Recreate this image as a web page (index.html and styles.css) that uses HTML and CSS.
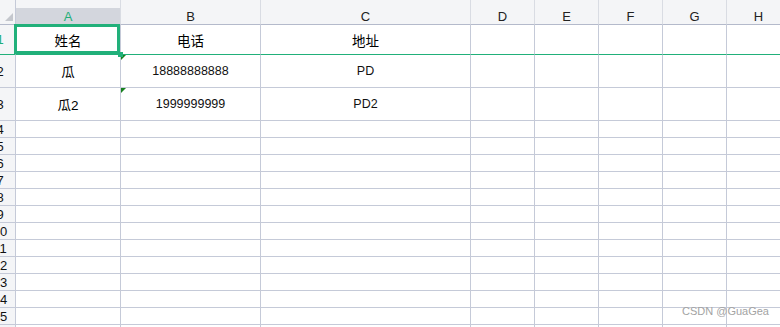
FILE: index.html
```html
<!DOCTYPE html>
<html lang="zh-CN">
<head>
    <meta charset="UTF-8">
    <title>Sheet1</title>
    <link rel="stylesheet" href="styles.css">
</head>
<body>

<div class="sheet">
    <!-- intestazione colonne -->
    <div class="row head">
        <div class="cell corner"><span class="tri"></span></div>
        <div class="cell col active">A</div>
        <div class="cell col">B</div>
        <div class="cell col">C</div>
        <div class="cell col">D</div>
        <div class="cell col">E</div>
        <div class="cell col">F</div>
        <div class="cell col">G</div>
        <div class="cell col">H</div>
    </div>

    <div class="row r1 frozen">
        <div class="cell num active"><span>1</span></div>
        <div class="cell sel zh">姓名<span class="handle"></span></div>
        <div class="cell zh">电话</div>
        <div class="cell zh">地址</div>
        <div class="cell"></div><div class="cell"></div><div class="cell"></div><div class="cell"></div><div class="cell"></div>
    </div>

    <div class="row r2">
        <div class="cell num"><span>2</span></div>
        <div class="cell zh">瓜</div>
        <div class="cell flag">18888888888</div>
        <div class="cell">PD</div>
        <div class="cell"></div><div class="cell"></div><div class="cell"></div><div class="cell"></div><div class="cell"></div>
    </div>

    <div class="row r2">
        <div class="cell num"><span>3</span></div>
        <div class="cell zh">瓜2</div>
        <div class="cell flag">1999999999</div>
        <div class="cell">PD2</div>
        <div class="cell"></div><div class="cell"></div><div class="cell"></div><div class="cell"></div><div class="cell"></div>
    </div>

    <div id="empty-rows"></div>
</div>

<div class="mark">CSDN @GuaGea</div>

<script>
// righe vuote 4..16
const box = document.getElementById('empty-rows');
for (let n = 4; n <= 16; n++) {
    let html = `<div class="cell num"><span>${n}</span></div>`;
    for (let c = 0; c < 8; c++) html += '<div class="cell"></div>';
    const row = document.createElement('div');
    row.className = 'row small';
    row.innerHTML = html;
    box.appendChild(row);
}
</script>

</body>
</html>
```

FILE: styles.css
```css
body { margin: 0; background: #fff; overflow: hidden; font-family: "Liberation Sans", Arial, "Noto Sans CJK SC", sans-serif; color: #111; }
.sheet { width: 790px; }
.row { display: grid; grid-template-columns: 16px 105px 140px 210px repeat(5, 64px); }
.row.head { height: 25px; }
.row.r1 { height: 30px; }
.row.r2 { height: 33px; }
.row.small { height: 17px; }

.cell { box-sizing: border-box; border-right: 1px solid #c5cad8; border-bottom: 1px solid #c5cad8; display: flex; align-items: center; justify-content: center; font-size: 12.5px; position: relative; }
.cell.zh { font-size: 13.5px; color: #000; }
.frozen .cell { border-bottom-color: #21b07a; }

.head .cell { background: #f4f5f7; border-right-color: #d9dce3; border-bottom-color: #b4bacb; padding-top: 8px; font-size: 13px; color: #222; }
.head .cell.active { background: linear-gradient(#f4f5f7 8px, #d3d6dd 8px); color: #1fae78; }
.head .corner { border-right-color: #c5cad8; }
.tri { position: absolute; left: 5px; top: 13px; width: 0; height: 0; border-left: 8px solid transparent; border-bottom: 8px solid #c4c7cd; }

.num { background: #f4f5f7; justify-content: flex-start; overflow: hidden; font-size: 13px; }
.num span { flex: none; width: 32px; margin-left: -16px; text-align: center; }
.num.active { color: #1fae78; }

.sel::after { content: ""; position: absolute; left: -2px; top: -1px; width: 106px; height: 30px; box-sizing: border-box; border: 3px solid #21b07a; }
.handle { position: absolute; right: -3px; bottom: -3px; width: 5px; height: 5px; background: #21b07a; z-index: 2; }
.flag::before { content: ""; position: absolute; left: 0; top: 0; border-top: 5px solid #17801f; border-right: 5px solid transparent; }

.mark { position: absolute; left: 682px; top: 305px; font-size: 11px; color: #a3a3a3; }
```
